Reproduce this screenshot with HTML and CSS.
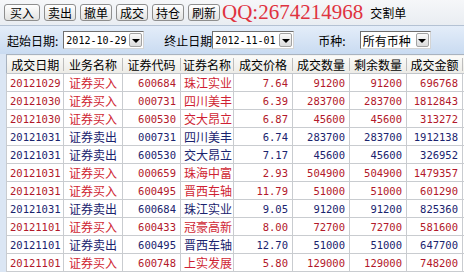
FILE: index.html
```html
<!DOCTYPE html>
<html>
<head>
	<meta charset="utf-8">
	<title>交割单</title>
	<link rel="stylesheet" href="styles.css">
</head>
<body>
	<div class='toolbar'>
		<span class='btn wide'>买入</span>
		<span class='btn'>卖出</span>
		<span class='btn'>撤单</span>
		<span class='btn'>成交</span>
		<span class='btn'>持仓</span>
		<span class='btn'>刷新</span>
		<span class='qq'>QQ:2674214968</span>
		<span class='title'>交割单</span>
	</div>

	<div class='filter'>
		<span class='label first'>起始日期:</span>
		<span class='combo date1'><span class='val num'>2012-10-29</span><span class='arrow'></span></span>
		<span class='label second'>终止日期</span>
		<span class='combo date2'><span class='val num'>2012-11-01</span><span class='arrow'></span></span>
		<span class='label third'>币种:</span>
		<span class='combo money'><span class='val'>所有币种</span><span class='arrow'></span></span>
	</div>

	<table class='grid'>
		<colgroup>
			<col style='width:57px'><col style='width:59px'><col style='width:58px'><col style='width:53px'>
			<col style='width:59px'><col style='width:57px'><col style='width:57px'><col style='width:56px'>
			<col style='width:60px'>
		</colgroup>
		<thead>
			<tr>
				<th>成交日期</th><th>业务名称</th><th>证券代码</th><th>证券名称</th>
				<th>成交价格</th><th>成交数量</th><th>剩余数量</th><th>成交金额</th><th></th>
			</tr>
		</thead>
		<tbody>
			<tr class='buy'><td class='num'>20121029</td><td class='txt'>证券买入</td><td class='num'>600684</td><td class='txt'>珠江实业</td><td class='num'>7.64</td><td class='num'>91200</td><td class='num'>91200</td><td class='num'>696768</td><td></td></tr>
			<tr class='buy'><td class='num'>20121030</td><td class='txt'>证券买入</td><td class='num'>000731</td><td class='txt'>四川美丰</td><td class='num'>6.39</td><td class='num'>283700</td><td class='num'>283700</td><td class='num'>1812843</td><td></td></tr>
			<tr class='buy'><td class='num'>20121030</td><td class='txt'>证券买入</td><td class='num'>600530</td><td class='txt'>交大昂立</td><td class='num'>6.87</td><td class='num'>45600</td><td class='num'>45600</td><td class='num'>313272</td><td></td></tr>
			<tr class='sell'><td class='num'>20121031</td><td class='txt'>证券卖出</td><td class='num'>000731</td><td class='txt'>四川美丰</td><td class='num'>6.74</td><td class='num'>283700</td><td class='num'>283700</td><td class='num'>1912138</td><td></td></tr>
			<tr class='sell'><td class='num'>20121031</td><td class='txt'>证券卖出</td><td class='num'>600530</td><td class='txt'>交大昂立</td><td class='num'>7.17</td><td class='num'>45600</td><td class='num'>45600</td><td class='num'>326952</td><td></td></tr>
			<tr class='buy'><td class='num'>20121031</td><td class='txt'>证券买入</td><td class='num'>000659</td><td class='txt'>珠海中富</td><td class='num'>2.93</td><td class='num'>504900</td><td class='num'>504900</td><td class='num'>1479357</td><td></td></tr>
			<tr class='buy'><td class='num'>20121031</td><td class='txt'>证券买入</td><td class='num'>600495</td><td class='txt'>晋西车轴</td><td class='num'>11.79</td><td class='num'>51000</td><td class='num'>51000</td><td class='num'>601290</td><td></td></tr>
			<tr class='sell'><td class='num'>20121031</td><td class='txt'>证券卖出</td><td class='num'>600684</td><td class='txt'>珠江实业</td><td class='num'>9.05</td><td class='num'>91200</td><td class='num'>91200</td><td class='num'>825360</td><td></td></tr>
			<tr class='buy'><td class='num'>20121101</td><td class='txt'>证券买入</td><td class='num'>600433</td><td class='txt'>冠豪高新</td><td class='num'>8.00</td><td class='num'>72700</td><td class='num'>72700</td><td class='num'>581600</td><td></td></tr>
			<tr class='sell'><td class='num'>20121101</td><td class='txt'>证券卖出</td><td class='num'>600495</td><td class='txt'>晋西车轴</td><td class='num'>12.70</td><td class='num'>51000</td><td class='num'>51000</td><td class='num'>647700</td><td></td></tr>
			<tr class='buy'><td class='num'>20121101</td><td class='txt'>证券买入</td><td class='num'>600748</td><td class='txt'>上实发展</td><td class='num'>5.80</td><td class='num'>129000</td><td class='num'>129000</td><td class='num'>748200</td><td></td></tr>
		</tbody>
	</table>
</body>
</html>
```

FILE: styles.css
```css
body {
	margin: 0;
	width: 464px;
	height: 272px;
	overflow: hidden;
	background-color: #dbe6f4;
	font-family: "Noto Sans CJK SC", "Noto Sans", sans-serif;
	font-size: 12px;
	color: #000;
}

.toolbar {
	display: flex;
	align-items: flex-start;
	gap: 4px;
	height: 26px;
	padding: 4px 0 0 4px;
	box-sizing: border-box;
	background: linear-gradient(#f6f7f9, #e9edf2);
	border-bottom: 1px solid #b4c2d4;
}

.btn {
	display: flex;
	align-items: center;
	justify-content: center;
	width: 32px;
	height: 17px;
	box-sizing: border-box;
	border: 1px solid #8e8e8e;
	border-radius: 3px;
	background: linear-gradient(#ffffff, #e2e2e0);
	line-height: 1;
}

.btn.wide {
	width: 36px;
}

.qq {
	margin-left: -2px;
	margin-top: -3px;
	font-family: "Liberation Serif", serif;
	font-size: 21px;
	line-height: 22px;
	color: #e0323f;
}

.title {
	margin-left: 3px;
	line-height: 17px;
}

.filter {
	display: flex;
	align-items: center;
	height: 28px;
	padding-left: 7px;
	box-sizing: border-box;
	background: linear-gradient(#e4edf9, #c9dbf1);
	white-space: nowrap;
}

.label.first {
	margin-right: 5px;
}

.label.second {
	margin-left: 20px;
}

.label.third {
	margin-left: 24px;
	margin-right: 14px;
}

.combo {
	display: flex;
	align-items: center;
	justify-content: space-between;
	flex-shrink: 0;
	height: 18px;
	box-sizing: border-box;
	padding: 0 1px 0 2px;
	background-color: #fff;
	border: 1px solid;
	border-color: #6f6f6f #d4d4d4 #d4d4d4 #6f6f6f;
	white-space: nowrap;
}

.combo.date1 {
	width: 81px;
}

.combo.date2 {
	width: 82px;
}

.combo.money {
	width: 71px;
}

.val.num {
	font-family: "DejaVu Sans Mono", monospace;
	font-size: 10px;
}

.arrow {
	display: flex;
	align-items: center;
	justify-content: center;
	flex-shrink: 0;
	width: 13px;
	height: 14px;
	box-sizing: border-box;
	border: 1px solid #a2a2a2;
	border-radius: 2px;
	background: linear-gradient(#fbfbfb, #dcdcdc);
}

.arrow::before {
	content: '';
	border-left: 4px solid transparent;
	border-right: 4px solid transparent;
	border-top: 4px solid #000;
	margin-top: 1px;
}

.grid {
	margin-left: 6px;
	border-collapse: collapse;
	table-layout: fixed;
	width: 516px;
	background-color: #fff;
}

.grid th {
	height: 18px;
	padding: 0;
	font-weight: normal;
	text-align: center;
	border-top: 1px solid #a9b3bf;
	border-bottom: 1px solid #c2c6cb;
	background:
		linear-gradient(#bdbdbd, #bdbdbd) right 0 center / 1px 13px no-repeat,
		linear-gradient(#fbfbf9, #ecebe6);
}

.grid th:first-child {
	border-left: 1px solid #a9b3bf;
}

.grid td {
	height: 17px;
	padding: 0 3px;
	white-space: nowrap;
	overflow: hidden;
	border: 1px solid #c9ccd0;
}

.grid td.num {
	text-align: right;
	padding-right: 4px;
	font-family: "DejaVu Sans Mono", monospace;
	font-size: 10.5px;
}

.grid td.txt {
	text-align: center;
}

.buy td {
	color: #b2182a;
}

.buy td.txt {
	color: #cf1f33;
}

.sell td {
	color: #1a236e;
}
```
